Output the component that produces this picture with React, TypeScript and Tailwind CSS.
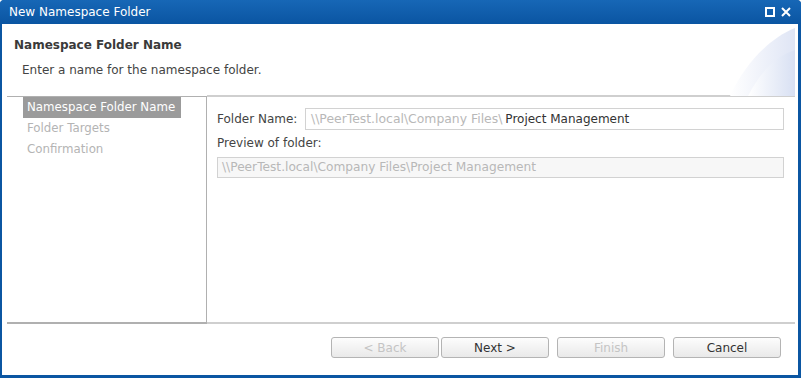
import React from "react";

const font = { fontFamily: '"DejaVu Sans", Verdana, sans-serif' };

function Btn({ label, disabled }: { label: string; disabled?: boolean }) {
  return (
    <div
      className={`w-[108px] h-[21px] rounded-[3px] border border-[#b4b4b4] bg-gradient-to-b from-[#fdfdfd] to-[#e9e9e9] flex items-center justify-center text-[12px] ${
        disabled ? "text-[#c4c4c4]" : "text-[#333]"
      }`}
    >
      {label}
    </div>
  );
}

export default function App() {
  return (
    <div
      className="w-[801px] h-[378px] bg-[#0b56a2] rounded-t-[4px] flex flex-col pl-[2px] pr-[3px] pb-[3px] overflow-hidden"
      style={font}
    >
      <div className="h-[24px] flex items-center justify-between bg-gradient-to-b from-[#1767b6] to-[#0a55a2] -ml-[2px] -mr-[3px] pl-[9px] pr-[10px] rounded-t-[4px]">
        <span className="text-white text-[12px] leading-none">New Namespace Folder</span>
        <div className="flex items-center gap-[6px]">
          <svg width="10" height="10" viewBox="0 0 10 10">
            <rect x="1" y="1" width="8" height="8" fill="none" stroke="white" strokeWidth="2" />
          </svg>
          <svg width="10" height="10" viewBox="0 0 10 10">
            <path d="M1 1 L9 9 M9 1 L1 9" stroke="white" strokeWidth="2" />
          </svg>
        </div>
      </div>
      <div className="flex-1 bg-white flex flex-col">
        <div className="h-[72px] relative flex flex-col">
          <svg className="absolute right-0 top-[4px]" width="68" height="68" viewBox="0 0 68 68">
            <defs>
              <linearGradient id="g1" x1="0" y1="0" x2="1" y2="0">
                <stop offset="0" stopColor="#ffffff" />
                <stop offset="1" stopColor="#dfe5f5" />
              </linearGradient>
              <linearGradient id="g2" x1="0" y1="0" x2="1" y2="0">
                <stop offset="0" stopColor="#ffffff" />
                <stop offset="1" stopColor="#d8e0f3" />
              </linearGradient>
            </defs>
            <path d="M0 68 C 15 35, 40 10, 65 0 L 65 68 Z" fill="url(#g1)" />
            <path d="M18 68 C 30 45, 45 28, 65 22 L 65 68 Z" fill="url(#g2)" />
          </svg>
          <div className="relative pl-[12px] pt-[14px] text-[12px] font-bold text-[#3a3a3a] leading-[14px]">
            Namespace Folder Name
          </div>
          <div className="relative pl-[20px] pt-[11px] text-[12px] text-[#444] leading-[14px]">
            Enter a name for the namespace folder.
          </div>
        </div>
        <div className="ml-[5px] mr-[3px] h-[228px] flex">
          <div className="w-[200px] border-t border-b-2 border-r border-[#b0b0b0] pl-[16px] flex flex-col">
            <div className="w-[158px] h-[21px] bg-[#9b9b9b] text-white text-[11.8px] flex items-center pl-[4px]">
              Namespace Folder Name
            </div>
            <div className="h-[21px] text-[#b4b4b4] text-[11.8px] flex items-center pl-[4px]">
              Folder Targets
            </div>
            <div className="h-[21px] text-[#b4b4b4] text-[11.8px] flex items-center pl-[4px]">
              Confirmation
            </div>
          </div>
          <div className="flex-1 border-t-2 border-b-2 border-[#cfcfcf] -mt-[1px] pl-[10px] pr-[11px] pt-[11px] flex flex-col">
            <div className="flex items-center h-[22px]">
              <span className="w-[88px] text-[12px] text-[#444]">Folder Name:</span>
              <div className="flex-1 h-[22px] border border-[#d2d2d2] flex items-center pl-[5px]">
                <span className="text-[#b8b8b8] text-[12.4px]">\\PeerTest.local\Company Files\</span>
                <span className="text-[#333] ml-[3px] text-[12px]">Project Management</span>
              </div>
            </div>
            <div className="mt-[6px] text-[12px] text-[#444] leading-[14px]">Preview of folder:</div>
            <div className="mt-[7px] h-[21px] border border-[#d2d2d2] bg-[#f7f7f7] flex items-center pl-[4px] text-[12.2px] text-[#b8b8b8]">
              \\PeerTest.local\Company Files\Project Management
            </div>
          </div>
        </div>
        <div className="flex justify-end gap-[2px] pr-[17px] pt-[13px]">
          <Btn label="< Back" disabled />
          <Btn label="Next >" />
          <div className="w-[4px]" />
          <Btn label="Finish" disabled />
          <div className="w-[4px]" />
          <Btn label="Cancel" />
        </div>
      </div>
    </div>
  );
}
